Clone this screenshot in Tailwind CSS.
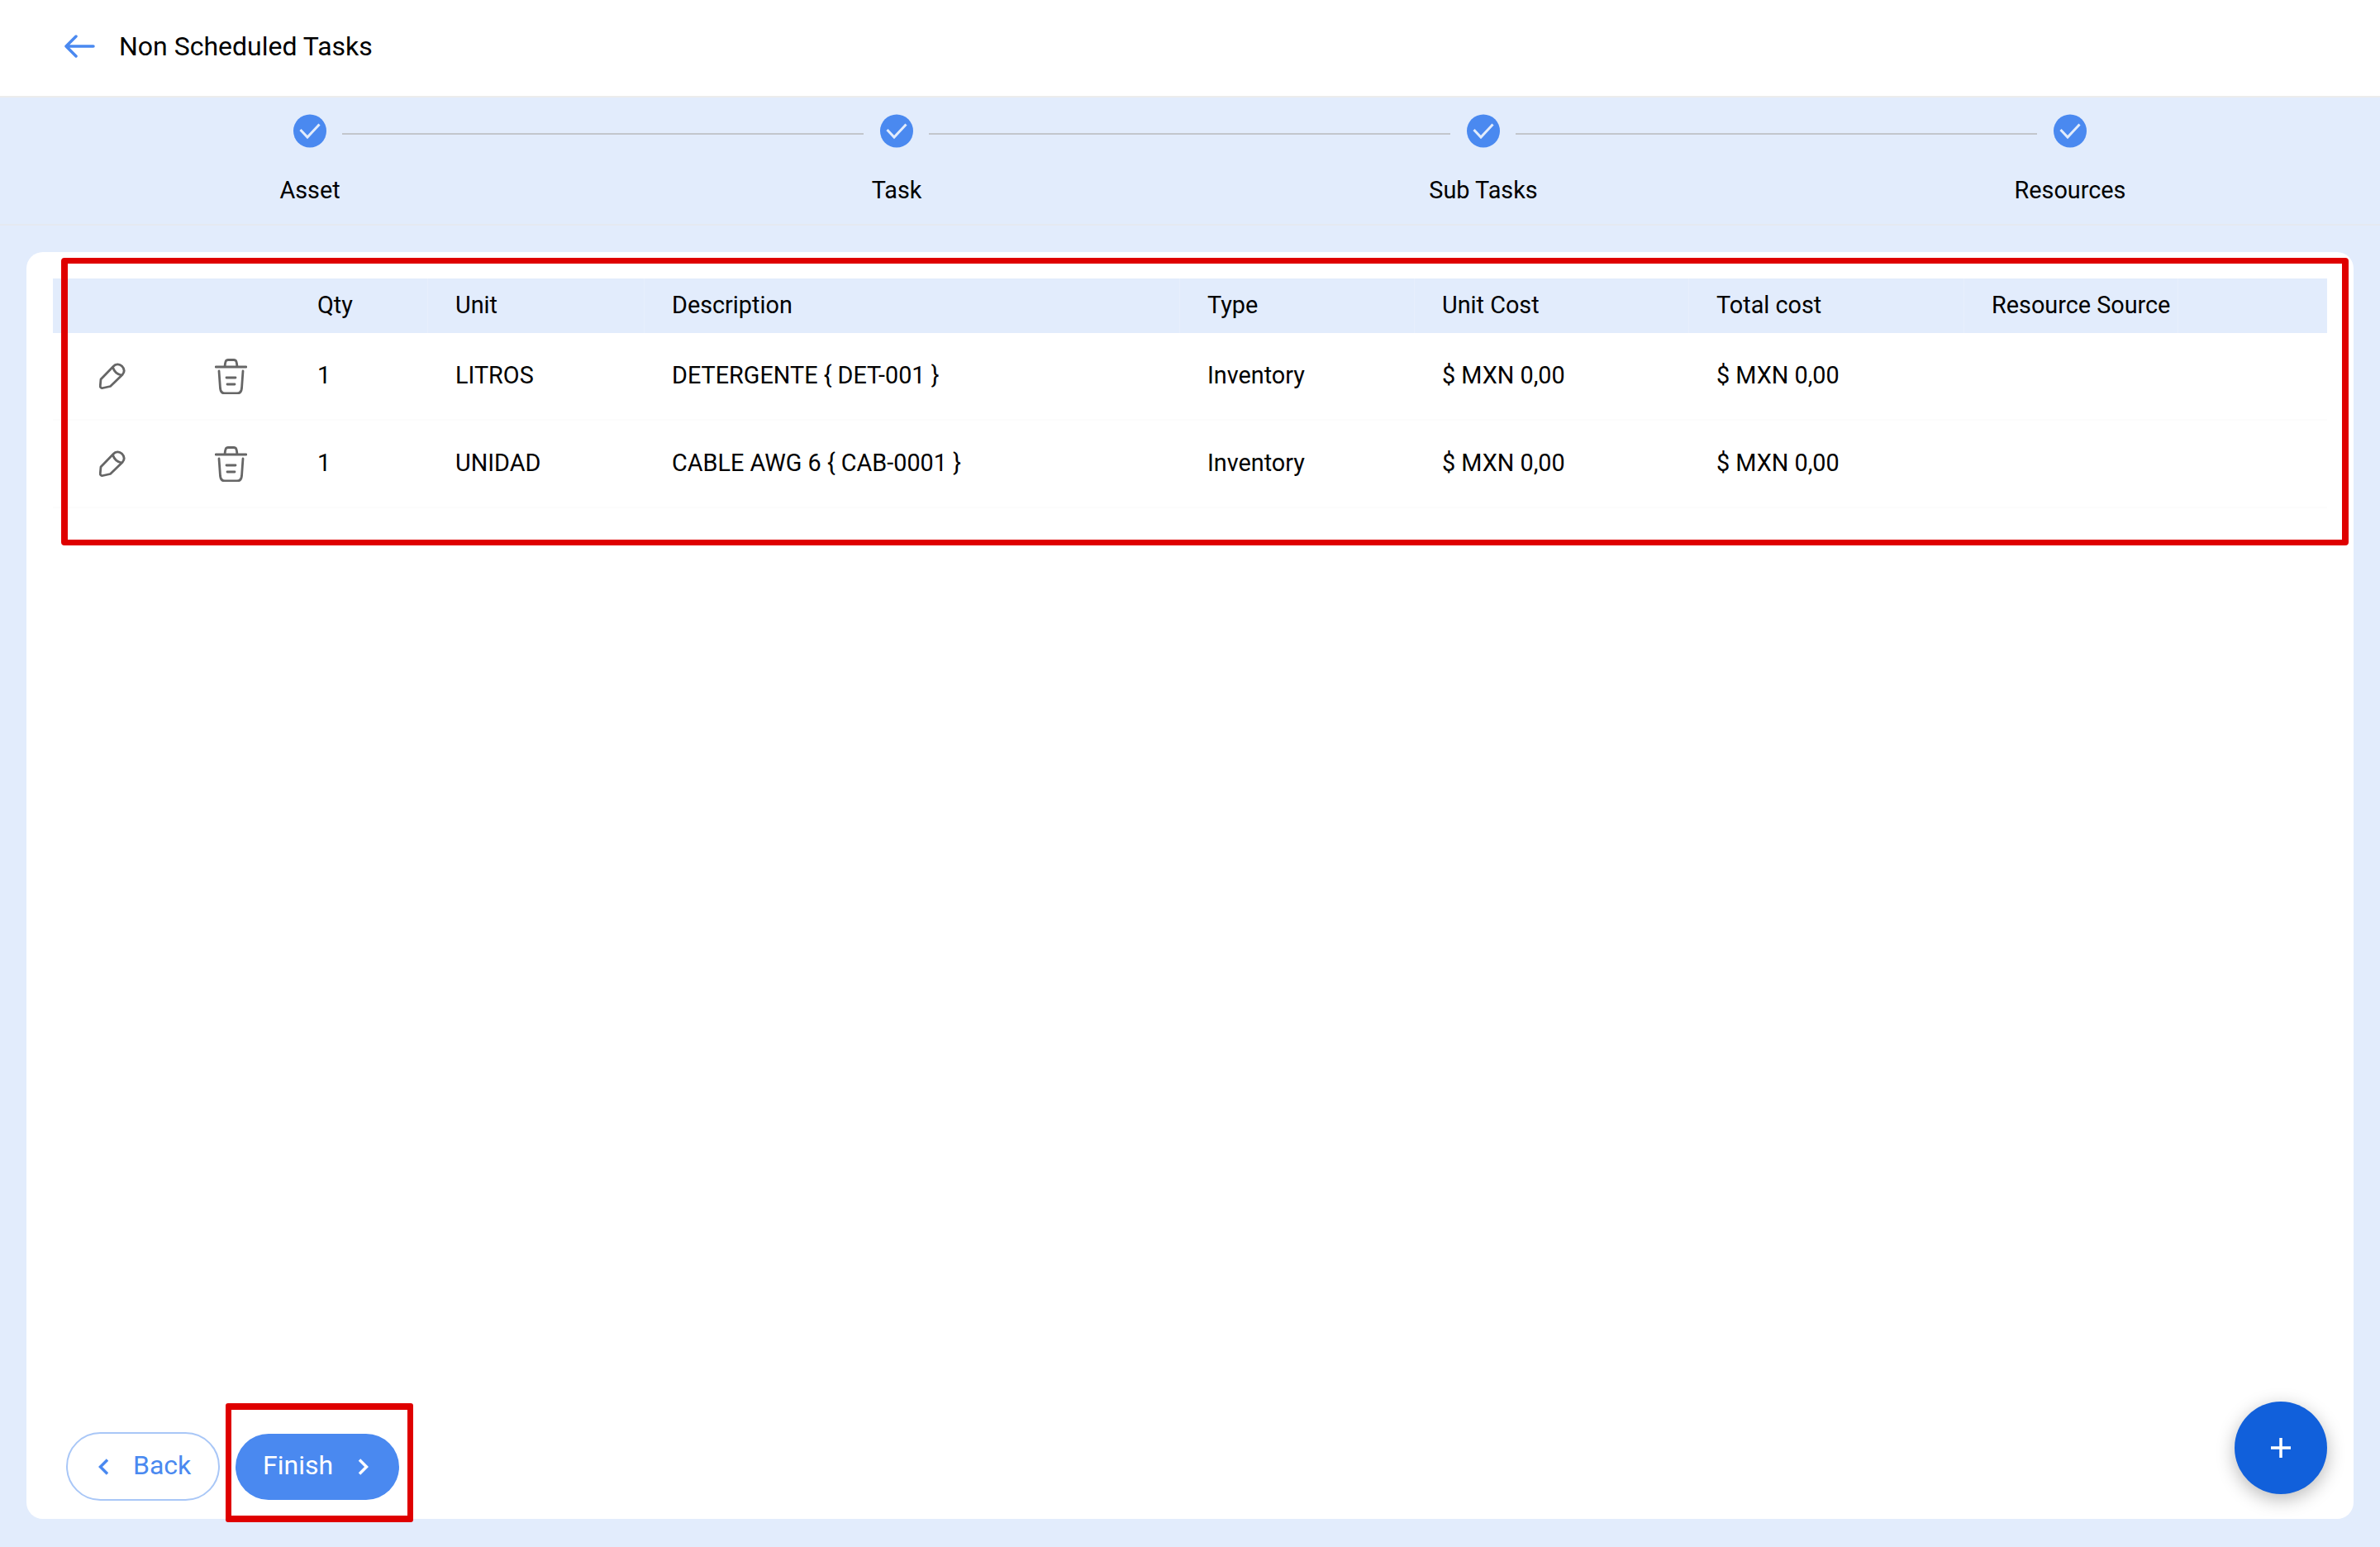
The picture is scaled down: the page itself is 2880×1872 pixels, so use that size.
<!DOCTYPE html>
<html lang="en">
<head>
    <meta charset="UTF-8">
    <title>Non Scheduled Tasks</title>
    <script src="https://cdn.jsdelivr.net/npm/@tailwindcss/browser@4"></script>
</head>
<body class="bg-[#e2ecfc] font-['Roboto',sans-serif] text-black w-[2880px] h-[1872px] overflow-hidden flex flex-col">

    <!-- top bar -->
    <header class="h-[118px] shrink-0 bg-white border-b-2 border-[#ececec] flex items-center pl-[78px] pb-[4px] gap-[29px]">
        <svg class="w-[37px] h-[28px]" viewBox="0 0 37 28" fill="none" stroke="#4a89f0" stroke-width="3.5" stroke-linecap="round" stroke-linejoin="round">
            <path d="M35 14H2M14 2 2 14l12 12"/>
        </svg>
        <h1 class="text-[32px] leading-none">Non Scheduled Tasks</h1>
    </header>

    <!-- stepper -->
    <div class="h-[155px] shrink-0 border-b-2 border-[#e5e9f1] flex justify-center pt-[20px]">
        <div class="w-[710px] flex flex-col items-center relative">
            <svg class="w-[40px] h-[41px]" viewBox="0 0 40 41"><circle cx="20" cy="20.5" r="20" fill="#4a89f0"/><path d="M8.5 19l8.5 9L31.5 12.5" fill="none" stroke="#e2ecfc" stroke-width="3"/></svg>
            <span class="mt-[33px] text-[28.8px] leading-[36px]">Asset</span>
            <span class="absolute left-[394px] top-[23px] w-[631px] h-[2px] bg-[#c2c6cc]"></span>
        </div>
        <div class="w-[710px] flex flex-col items-center relative">
            <svg class="w-[40px] h-[41px]" viewBox="0 0 40 41"><circle cx="20" cy="20.5" r="20" fill="#4a89f0"/><path d="M8.5 19l8.5 9L31.5 12.5" fill="none" stroke="#e2ecfc" stroke-width="3"/></svg>
            <span class="mt-[33px] text-[28.8px] leading-[36px]">Task</span>
            <span class="absolute left-[394px] top-[23px] w-[631px] h-[2px] bg-[#c2c6cc]"></span>
        </div>
        <div class="w-[710px] flex flex-col items-center relative">
            <svg class="w-[40px] h-[41px]" viewBox="0 0 40 41"><circle cx="20" cy="20.5" r="20" fill="#4a89f0"/><path d="M8.5 19l8.5 9L31.5 12.5" fill="none" stroke="#e2ecfc" stroke-width="3"/></svg>
            <span class="mt-[33px] text-[28.8px] leading-[36px]">Sub Tasks</span>
            <span class="absolute left-[394px] top-[23px] w-[631px] h-[2px] bg-[#c2c6cc]"></span>
        </div>
        <div class="w-[710px] flex flex-col items-center">
            <svg class="w-[40px] h-[41px]" viewBox="0 0 40 41"><circle cx="20" cy="20.5" r="20" fill="#4a89f0"/><path d="M8.5 19l8.5 9L31.5 12.5" fill="none" stroke="#e2ecfc" stroke-width="3"/></svg>
            <span class="mt-[33px] text-[28.8px] leading-[36px]">Resources</span>
        </div>
    </div>

    <!-- card -->
    <main class="relative ml-[32px] mt-[32px] w-[2816px] h-[1533px] bg-white rounded-[20px] flex flex-col">
        <div class="px-[32px] pt-[32px]">
            <table class="w-[2752px] table-fixed border-separate border-spacing-0 text-[28.8px] text-left">
                <colgroup>
                    <col class="w-[144px]"><col class="w-[143px]"><col class="w-[167px]"><col class="w-[262px]"><col class="w-[648px]">
                    <col class="w-[284px]"><col class="w-[332px]"><col class="w-[333px]"><col class="w-[259px]"><col class="w-[180px]">
                </colgroup>
                <thead class="bg-[#e2ecfc]">
                    <tr class="h-[66px]">
                        <th></th>
                        <th></th>
                        <th class="font-normal pl-[33px] border-r border-[#e7effc]">Qty</th>
                        <th class="font-normal pl-[33px] border-r border-[#e7effc]">Unit</th>
                        <th class="font-normal pl-[33px] border-r border-[#e7effc]">Description</th>
                        <th class="font-normal pl-[33px] border-r border-[#e7effc]">Type</th>
                        <th class="font-normal pl-[33px] border-r border-[#e7effc]">Unit Cost</th>
                        <th class="font-normal pl-[33px] border-r border-[#e7effc]">Total cost</th>
                        <th class="font-normal pl-[33px] border-r border-[#e7effc]">Resource Source</th>
                        <th></th>
                    </tr>
                </thead>
                <tbody>
                    <tr class="h-[106px]">
                        <td class="border-b-2 border-[#fcfcfc]">
                            <svg class="block mx-auto w-[32px] h-[32px]" viewBox="0 0 32 32" fill="none" stroke="#666" stroke-width="2.8" stroke-linejoin="round" stroke-linecap="round"><path d="M2 20 17 4.5C20 1 24.5 1 27.5 4 31 7.5 31 11 28 14.5L13.5 28.5 4.5 30.5C2.5 31 1 29.5 1.3 28Z"/><path d="M16.5 5.5C18 10 22 14 27 15"/></svg>
                        </td>
                        <td class="border-b-2 border-[#fcfcfc]">
                            <svg class="block mx-auto w-[39px] h-[43px]" viewBox="0 0 39 43" fill="none" stroke="#666" stroke-width="2.8" stroke-linecap="round"><path d="M1 10H38M12 10C12.500 4 13 1.500 16 1.500H23C26 1.500 26.500 4 27 10"/><path d="M5 15 6.500 36C7 40 9 42 12 42H27C30 42 32 40 32.500 36L34 15"/><path d="M14 23H25M15 31H24"/></svg>
                        </td>
                        <td class="pl-[33px] border-b-2 border-[#fcfcfc]">1</td>
                        <td class="pl-[33px] border-b-2 border-[#fcfcfc]">LITROS</td>
                        <td class="pl-[33px] border-b-2 border-[#fcfcfc]">DETERGENTE { DET-001 }</td>
                        <td class="pl-[33px] border-b-2 border-[#fcfcfc]">Inventory</td>
                        <td class="pl-[33px] border-b-2 border-[#fcfcfc]">$ MXN 0,00</td>
                        <td class="pl-[33px] border-b-2 border-[#fcfcfc]">$ MXN 0,00</td>
                        <td class="border-b-2 border-[#fcfcfc]"></td>
                        <td class="border-b-2 border-[#fcfcfc]"></td>
                    </tr>
                    <tr class="h-[106px]">
                        <td class="border-b-2 border-[#fcfcfc]">
                            <svg class="block mx-auto w-[32px] h-[32px]" viewBox="0 0 32 32" fill="none" stroke="#666" stroke-width="2.8" stroke-linejoin="round" stroke-linecap="round"><path d="M2 20 17 4.5C20 1 24.5 1 27.5 4 31 7.5 31 11 28 14.5L13.5 28.5 4.5 30.5C2.5 31 1 29.5 1.3 28Z"/><path d="M16.5 5.5C18 10 22 14 27 15"/></svg>
                        </td>
                        <td class="border-b-2 border-[#fcfcfc]">
                            <svg class="block mx-auto w-[39px] h-[43px]" viewBox="0 0 39 43" fill="none" stroke="#666" stroke-width="2.8" stroke-linecap="round"><path d="M1 10H38M12 10C12.500 4 13 1.500 16 1.500H23C26 1.500 26.500 4 27 10"/><path d="M5 15 6.500 36C7 40 9 42 12 42H27C30 42 32 40 32.500 36L34 15"/><path d="M14 23H25M15 31H24"/></svg>
                        </td>
                        <td class="pl-[33px] border-b-2 border-[#fcfcfc]">1</td>
                        <td class="pl-[33px] border-b-2 border-[#fcfcfc]">UNIDAD</td>
                        <td class="pl-[33px] border-b-2 border-[#fcfcfc]">CABLE AWG 6 { CAB-0001 }</td>
                        <td class="pl-[33px] border-b-2 border-[#fcfcfc]">Inventory</td>
                        <td class="pl-[33px] border-b-2 border-[#fcfcfc]">$ MXN 0,00</td>
                        <td class="pl-[33px] border-b-2 border-[#fcfcfc]">$ MXN 0,00</td>
                        <td class="border-b-2 border-[#fcfcfc]"></td>
                        <td class="border-b-2 border-[#fcfcfc]"></td>
                    </tr>
                </tbody>
            </table>
        </div>

        <!-- footer buttons -->
        <div class="mt-auto flex items-center gap-[19px] pl-[48px] pb-[22px]">
            <button class="w-[186px] h-[83px] rounded-full border-2 border-[#a9c7f7] bg-white text-[#4a89f0] text-[32px] flex items-center pl-[37px] gap-[30px]">
                <svg class="w-[12px] h-[20px]" viewBox="0 0 12 20" fill="none" stroke="#4a89f0" stroke-width="3.5"><path d="M11 1.500 2.500 10l8.500 8.500"/></svg>
                <span class="pb-[3px]">Back</span>
            </button>
            <button class="w-[198px] h-[80px] rounded-full bg-[#4a89f0] text-white text-[32px] flex items-center pl-[33px] gap-[30px]">
                <span class="pb-[3px]">Finish</span>
                <svg class="w-[13px] h-[20px]" viewBox="0 0 13 20" fill="none" stroke="#fff" stroke-width="3.5"><path d="M2 1.500 10.500 10 2 18.500"/></svg>
            </button>
        </div>

        <!-- add button -->
        <button class="absolute left-[2672px] top-[1391px] w-[112px] h-[112px] rounded-full bg-[#1160db] shadow-[0_6px_22px_rgba(0,0,0,0.28)] flex items-center justify-center">
            <svg class="w-[24px] h-[24px]" viewBox="0 0 24 24" stroke="#fff" stroke-width="3.500"><path d="M0 12H24M12 0V24"/></svg>
        </button>

        <!-- red annotation boxes -->
        <div class="absolute left-[42px] top-[7px] w-[2768px] h-[348px] border-x-[8px] border-y-[7px] border-[#df0000] rounded-[4px]"></div>
        <div class="absolute left-[241px] top-[1393px] w-[227px] h-[144px] border-x-[7px] border-y-[8px] border-[#df0000] rounded-[3px]"></div>
    </main>
</body>
</html>
